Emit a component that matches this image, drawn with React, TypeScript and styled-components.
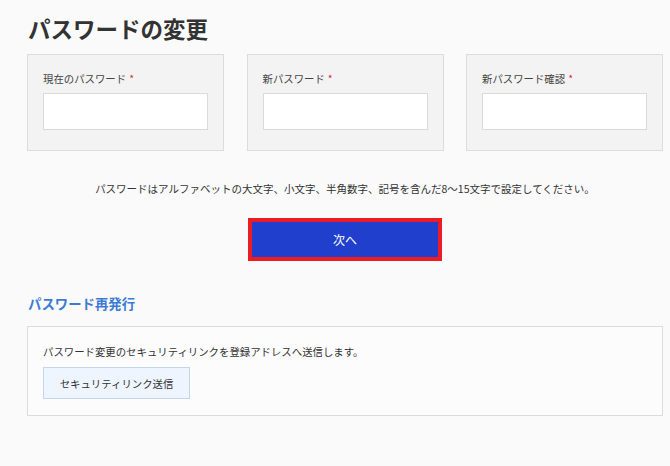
import React from 'react'
import styled, { createGlobalStyle } from 'styled-components'

const GlobalStyle = createGlobalStyle`
  html, body {
    margin: 0;
    padding: 0;
    background: #fafafa;
  }
  body {
    font-family: "Noto Sans CJK JP", "Noto Sans", sans-serif;
    color: #333;
  }
`

const Page = styled.div`
  width: 636px;
  padding: 13px 0 0 27px;
`

const Title = styled.h1`
  margin: 0;
  font-size: 22.5px;
  line-height: 30px;
  font-weight: 700;
  color: #333;
  padding-left: 1px;
`

const FieldRow = styled.div`
  display: grid;
  grid-template-columns: repeat(3, 197px);
  justify-content: space-between;
  margin-top: 11px;
`

const FieldCard = styled.div`
  box-sizing: border-box;
  height: 97px;
  background: #f3f3f3;
  border: 1px solid #dcdcdc;
  padding: 15px 15px 0 15px;
`

const Label = styled.label`
  display: block;
  font-size: 10.4px;
  line-height: 18px;
  color: #444;
  margin-bottom: 5px;
`

const Required = styled.span`
  color: #e6202a;
  margin-left: 3px;
`

const TextInput = styled.input`
  display: block;
  box-sizing: border-box;
  width: 100%;
  height: 37px;
  background: #fff;
  border: 1px solid #dadada;
  outline: none;
  margin: 0;
`

const Hint = styled.p`
  margin: 28px 0 0;
  text-align: center;
  font-size: 10.5px;
  line-height: 20px;
  color: #333;
`

const ActionRow = styled.div`
  display: flex;
  justify-content: center;
  margin-top: 19px;
`

const PrimaryButton = styled.button`
  box-sizing: border-box;
  width: 194px;
  height: 43px;
  background: #1f3fcc;
  border: 4px solid #ec1c24;
  color: #fff;
  font-family: inherit;
  font-size: 12px;
  padding: 0;
  cursor: pointer;
`

const SectionTitle = styled.h2`
  margin: 32px 0 0;
  font-size: 13.4px;
  line-height: 20px;
  font-weight: 700;
  color: #3d7ad6;
  padding-left: 1px;
`

const ReissueBox = styled.div`
  box-sizing: border-box;
  height: 90px;
  margin-top: 13px;
  background: #fcfcfc;
  border: 1px solid #dcdcdc;
  padding: 15px 15px 0 15px;
`

const BoxText = styled.p`
  margin: 0;
  font-size: 10.4px;
  line-height: 20px;
  color: #333;
`

const SecondaryButton = styled.button`
  box-sizing: border-box;
  width: 147px;
  height: 32px;
  margin-top: 5px;
  background: #eef5ff;
  border: 1px solid #c3d6ef;
  color: #333;
  font-family: inherit;
  font-size: 10.4px;
  padding: 0;
  cursor: pointer;
`

const fields = [
  { id: 'current', label: '現在のパスワード' },
  { id: 'new', label: '新パスワード' },
  { id: 'confirm', label: '新パスワード確認' },
]

export default function App() {
  return (
    <>
      <GlobalStyle />
      <Page>
        <Title>パスワードの変更</Title>
        <FieldRow>
          {fields.map((f) => (
            <FieldCard key={f.id}>
              <Label htmlFor={f.id}>
                {f.label}
                <Required>*</Required>
              </Label>
              <TextInput id={f.id} type="password" />
            </FieldCard>
          ))}
        </FieldRow>
        <Hint>パスワードはアルファベットの大文字、小文字、半角数字、記号を含んだ8〜15文字で設定してください。</Hint>
        <ActionRow>
          <PrimaryButton>次へ</PrimaryButton>
        </ActionRow>
        <SectionTitle>パスワード再発行</SectionTitle>
        <ReissueBox>
          <BoxText>パスワード変更のセキュリティリンクを登録アドレスへ送信します。</BoxText>
          <SecondaryButton>セキュリティリンク送信</SecondaryButton>
        </ReissueBox>
      </Page>
    </>
  )
}
